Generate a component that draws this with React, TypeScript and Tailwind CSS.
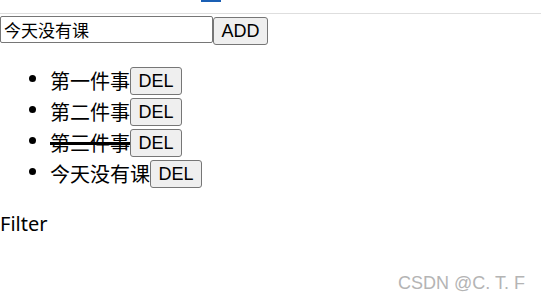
import { useState } from 'react';

type Todo = { id: number; text: string; done: boolean };

export default function App() {
    const [input, setInput] = useState('今天没有课');
    const [todos, setTodos] = useState<Todo[]>([
        { id: 1, text: '第一件事', done: false },
        { id: 2, text: '第二件事', done: false },
        { id: 3, text: '第三件事', done: true },
        { id: 4, text: '今天没有课', done: false },
    ]);

    const addTodo = () => {
        if (!input.trim()) return;
        setTodos([...todos, { id: Date.now(), text: input, done: false }]);
    };

    const delTodo = (id: number) => setTodos(todos.filter((t) => t.id !== id));

    const btn =
        "inline-flex items-center justify-center h-[28px] align-middle bg-[#efefef] border border-[#767676] rounded-[3px] text-[18px] leading-none text-black font-['Liberation_Sans','Noto_Sans_CJK_SC',sans-serif]";

    return (
        <div className="relative h-[303px] w-full overflow-hidden bg-white text-black font-['Noto_Sans','Noto_Sans_CJK_SC',sans-serif] text-[20px]">
            {/* top strip */}
            <div className="h-[14px] border-b border-[#dedede]">
                <div className="ml-[201px] w-[20px] h-[2px] bg-[#1a5fb4]" />
            </div>

            {/* input row */}
            <div className="flex items-start mt-[2px]">
                <input
                    value={input}
                    onChange={(e) => setInput(e.target.value)}
                    className="w-[213px] h-[27px] px-[3px] border border-[#767676] rounded-[2px] text-[17px] leading-none outline-none font-['Noto_Sans_CJK_SC',sans-serif]"
                />
                <button onClick={addTodo} className={`${btn} mt-[1px] w-[55px] h-[27px]`}>
                    ADD
                </button>
            </div>

            {/* todo list */}
            <ul className="list-disc pl-[50px] mt-[18px] mb-[23px]">
                {todos.map((t) => (
                    <li key={t.id} className="h-[31px] leading-[31px]">
                        <span className={`align-middle font-['Noto_Sans_CJK_SC',sans-serif] ${t.done ? 'line-through decoration-[3px]' : ''}`}>
                            {t.text}
                        </span>
                        <button onClick={() => delTodo(t.id)} className={`${btn} w-[52px]`}>
                            DEL
                        </button>
                    </li>
                ))}
            </ul>

            <div className="leading-[28px]">Filter</div>

            <div className="absolute right-[16px] bottom-[6px] text-[18px] text-[#b4b4b4] font-['Liberation_Sans','Noto_Sans_CJK_SC',sans-serif]">
                CSDN @C. T. F
            </div>
        </div>
    );
}
